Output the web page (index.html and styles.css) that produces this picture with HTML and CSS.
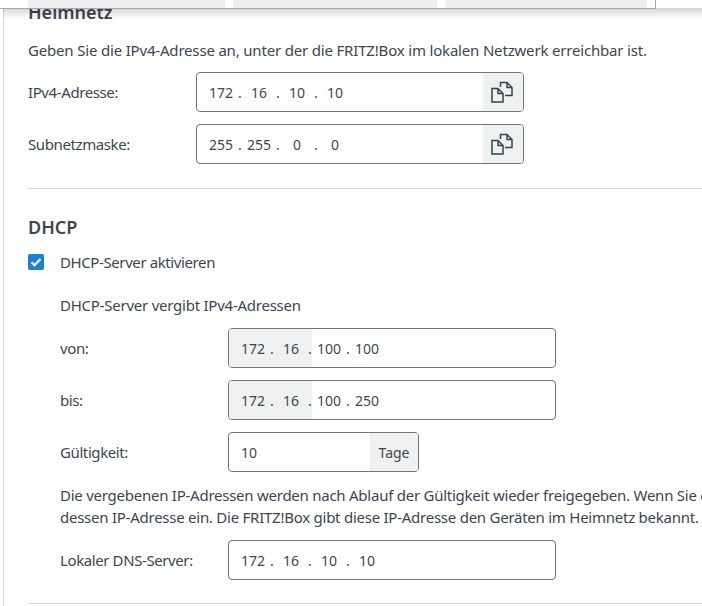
FILE: index.html
```html
<!DOCTYPE html>
<html lang="de">
<head>
<meta charset="utf-8">
<title>Heimnetz</title>
<link rel="stylesheet" href="styles.css">
</head>
<body>
<div class="topbar">
  <div class="tabs">
    <div class="tab tab-a"></div>
    <div class="tab tab-b"></div>
    <div class="tab tab-c"></div>
  </div>
</div>
<div class="shade"></div>
<main class="page">
  <h2 class="title-clipped">Heimnetz</h2>
  <p class="intro">Geben Sie die IPv4-Adresse an, unter der die FRITZ!Box im lokalen Netzwerk erreichbar ist.</p>
  <div class="row row-first">
    <label class="lbl lbl-outer">IPv4-Adresse:</label>
    <div class="field field-copy">
      <div class="ip"><span class="o">172</span><span class="d">.</span><span class="o">16</span><span class="d">.</span><span class="o">10</span><span class="d">.</span><span class="o">10</span></div>
      <div class="addon"><svg class="copy" viewBox="0 0 24 24" width="24" height="24"><path d="M9.5 7V2.5H16l5 5v8h-7M16 2.5v5h5" /><path d="M1 8.5h6l5 5v8.500H1zM7 8.500v5h5" /></svg></div>
    </div>
  </div>
  <div class="row">
    <label class="lbl lbl-outer">Subnetzmaske:</label>
    <div class="field field-copy">
      <div class="ip"><span class="o">255</span><span class="d">.</span><span class="o">255</span><span class="d">.</span><span class="o">0</span><span class="d">.</span><span class="o">0</span></div>
      <div class="addon"><svg class="copy" viewBox="0 0 24 24" width="24" height="24"><path d="M9.5 7V2.5H16l5 5v8h-7M16 2.5v5h5" /><path d="M1 8.5h6l5 5v8.500H1zM7 8.500v5h5" /></svg></div>
    </div>
  </div>
  <hr class="rule rule-one">
  <h2 class="title">DHCP</h2>
  <div class="check-row">
    <span class="box"><svg viewBox="0 0 16 16" width="16" height="16"><path d="M3.500 8.200l3 3 6-6.200"/></svg></span>
    <span class="check-label">DHCP-Server aktivieren</span>
  </div>
  <div class="nested">
    <p class="sub">DHCP-Server vergibt IPv4-Adressen</p>
    <div class="row">
      <label class="lbl lbl-inner">von:</label>
      <div class="field field-wide">
        <div class="fixed"><span class="o">172</span><span class="d">.</span><span class="o">16</span><span class="d">.</span></div>
        <div class="ip ip-rest"><span class="o">100</span><span class="d">.</span><span class="o">100</span></div>
      </div>
    </div>
    <div class="row">
      <label class="lbl lbl-inner">bis:</label>
      <div class="field field-wide">
        <div class="fixed"><span class="o">172</span><span class="d">.</span><span class="o">16</span><span class="d">.</span></div>
        <div class="ip ip-rest"><span class="o">100</span><span class="d">.</span><span class="o">250</span></div>
      </div>
    </div>
    <div class="row">
      <label class="lbl lbl-inner">Gültigkeit:</label>
      <div class="field field-days">
        <div class="days-val">10</div>
        <div class="addon addon-days">Tage</div>
      </div>
    </div>
    <p class="note">Die vergebenen IP-Adressen werden nach Ablauf der Gültigkeit wieder freigegeben. Wenn Sie einen<br>dessen IP-Adresse ein. Die FRITZ!Box gibt diese IP-Adresse den Geräten im Heimnetz bekannt.</p>
    <div class="row">
      <label class="lbl lbl-inner">Lokaler DNS-Server:</label>
      <div class="field field-wide">
        <div class="ip"><span class="o">172</span><span class="d">.</span><span class="o">16</span><span class="d">.</span><span class="o">10</span><span class="d">.</span><span class="o">10</span></div>
      </div>
    </div>
  </div>
  <hr class="rule rule-two">
</main>
</body>
</html>
```

FILE: styles.css
```css
html, body { margin: 0; padding: 0; height: 606px; overflow: hidden; background: #fff; }
body { font-family: "Noto Sans", sans-serif; font-size: 14px; color: #3c4650; position: relative; }
.topbar { position: absolute; top: 0; left: 0; width: 655px; height: 8px; background: #fff; border-right: 1px solid #a8a8a8; border-bottom: 1px solid #a8a8a8; z-index: 3; }
.tabs { display: flex; gap: 8px; margin-left: 28px; height: 8px; }
.tab { background: #efefef; height: 8px; }
.tab-a { width: 197px; }
.tab-b { width: 204px; }
.tab-c { width: 202px; }
.shade { position: absolute; top: 8px; left: 3px; right: 0; height: 11px; background: linear-gradient(rgba(0,0,0,.16), rgba(0,0,0,0)); z-index: 2; }
.page { margin-left: 3px; border-left: 1px solid #d9d9d9; height: 606px; padding: 1px 0 0 24px; overflow: hidden; }
.title-clipped { margin: 0; font-size: 18px; line-height: 22px; font-weight: 600; }
.intro, .lbl, .check-label, .sub, .note { font-size: 15px; }
.intro { margin: 16px 0 0; line-height: 22px; white-space: nowrap; letter-spacing: -.18px; }
.row { display: flex; align-items: center; margin-top: 12px; }
.row-first { margin-top: 11px; }
.lbl { display: block; line-height: 40px; white-space: nowrap; width: 168px; flex: none; letter-spacing: -.4px; }
.field { display: flex; height: 38px; border: 1px solid #6f7477; border-radius: 4px; overflow: hidden; background: #fff; }
.field-copy, .field-wide { width: 326px; }
.field-days { width: 189px; }
.ip { display: flex; flex: 1; align-items: center; padding-left: 12px; }
.o { flex: none; width: 24px; text-align: center; }
.d { flex: none; width: 14px; text-align: center; }
.addon { width: 40px; display: flex; align-items: center; justify-content: center; background: #eff1f1; }
.copy { fill: none; stroke: #36414c; stroke-width: 1.5; }
.rule { border: 0; height: 1px; background: #dcdcdc; margin: 0; }
.rule-one { margin-top: 24px; }
.title { margin: 27px 0 0; font-size: 18px; line-height: 22px; font-weight: 600; }
.check-row { display: flex; align-items: center; margin-top: 13px; height: 22px; }
.box { width: 16px; height: 16px; background: #1a80d8; border-radius: 2px; display: flex; }
.box svg { fill: none; stroke: #fff; stroke-width: 2.2; }
.check-label { margin-left: 16px; letter-spacing: -.4px; }
.nested { margin-left: 32px; }
.sub { margin: 21px 0 0; line-height: 22px; letter-spacing: -.24px; }
.fixed { display: flex; flex: none; align-items: center; width: 71px; padding-left: 12px; background: #eff1f1; }
.ip-rest { padding-left: 5px; }
.days-val { flex: 1; display: flex; align-items: center; padding-left: 12px; }
.addon-days { width: 48px; }
.note { margin: 12px 0 0; line-height: 22px; white-space: nowrap; letter-spacing: -.25px; }
.rule-two { margin-top: 23px; }
```
